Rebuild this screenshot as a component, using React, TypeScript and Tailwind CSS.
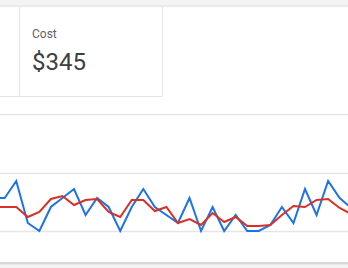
import React from 'react';

const STEP = 11.55;
const X0 = 4.7;
const TOP = 97;

// k = -1 .. 30
const blue = [198, 198, 181, 223, 231, 207, 198, 189, 215, 198, 207, 231, 207, 189, 207, 215, 223, 198, 231, 207, 231, 215, 231, 231, 225, 207, 223, 189, 215, 181, 198, 208];
const red = [207, 207, 207, 217, 212, 199, 196, 205, 200, 199, 212, 217, 200, 200, 211, 207, 223, 219, 225, 213, 222, 217, 226, 226, 225, 215, 206, 207, 200, 199, 208, 214];

function toPoints(values: number[]) {
    return values
        .map((y, i) => `${(X0 + STEP * (i - 1)).toFixed(2)},${(y - TOP).toFixed(1)}`)
        .join(' ');
}

function Chart() {
    return (
        <svg width="348" height="165" viewBox="0 0 348 165" className="block">
            {[17, 76, 134].map((y) => (
                <line key={y} x1="0" x2="348" y1={y + 0.5} y2={y + 0.5} stroke="#e6e6e6" strokeWidth="1.5" />
            ))}
            <polyline points={toPoints(blue)} fill="none" stroke="#1a73e8" strokeWidth="2" strokeLinejoin="miter" />
            <polyline points={toPoints(red)} fill="none" stroke="#d93025" strokeWidth="2" strokeLinejoin="miter" />
        </svg>
    );
}

export default function App() {
    return (
        <div className="w-[348px] h-[268px] overflow-hidden bg-[#f1f3f4] font-['Roboto','Liberation_Sans',sans-serif]">
            <div className="h-[5px]" />
            <div className="h-[2px] bg-[#e8e9eb]" />
            <div className="bg-white">
                <div className="flex h-[90px]">
                    <div className="w-[20px] border-r border-b border-[#e6e6e6]" />
                    <div className="w-[143px] border-r border-b border-[#e6e6e6] pl-3 pt-[19px]">
                        <div className="text-[12px] leading-4 text-[#5f6368]">Cost</div>
                        <div className="mt-1 text-[24px] leading-8 text-[#3c4043]">$345</div>
                    </div>
                </div>
                <Chart />
            </div>
            <div className="h-[2px] bg-[#d6d6d6]" />
            <div className="h-[1px] bg-[#e8e8e8]" />
        </div>
    );
}
